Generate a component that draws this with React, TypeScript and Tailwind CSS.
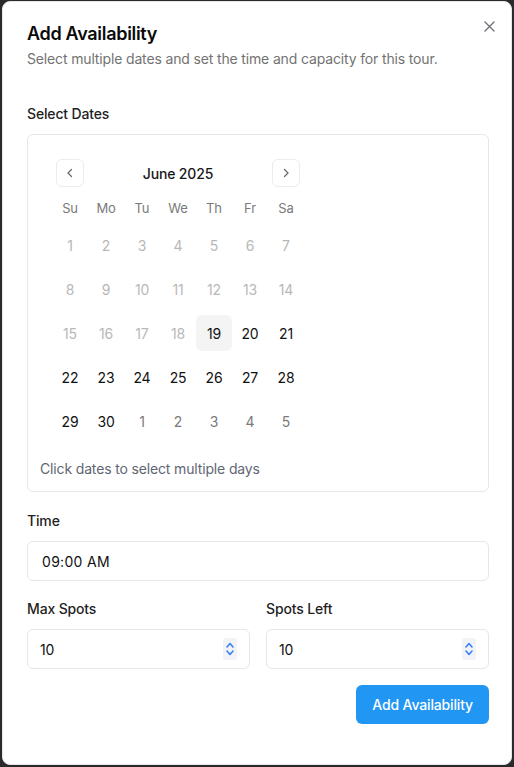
import React from "react";

const weeks: { d: number; t: "dis" | "sel" | "on" | "out" }[][] = [
  [1, 2, 3, 4, 5, 6, 7].map((d) => ({ d, t: "dis" as const })),
  [8, 9, 10, 11, 12, 13, 14].map((d) => ({ d, t: "dis" as const })),
  [
    { d: 15, t: "dis" },
    { d: 16, t: "dis" },
    { d: 17, t: "dis" },
    { d: 18, t: "dis" },
    { d: 19, t: "sel" },
    { d: 20, t: "on" },
    { d: 21, t: "on" },
  ],
  [22, 23, 24, 25, 26, 27, 28].map((d) => ({ d, t: "on" as const })),
  [
    { d: 29, t: "on" },
    { d: 30, t: "on" },
    { d: 1, t: "out" },
    { d: 2, t: "out" },
    { d: 3, t: "out" },
    { d: 4, t: "out" },
    { d: 5, t: "out" },
  ],
];

function Spinner() {
  return (
    <div className="w-[14px] h-[22px] rounded-[3px] bg-[#f1f3f7] flex items-center justify-center">
      <svg width="10" height="18" viewBox="0 0 10 18" fill="none">
        <path d="M2 7 L5 3.5 L8 7" stroke="#3b82f6" strokeWidth="1.6" strokeLinecap="round" strokeLinejoin="round" />
        <path d="M2 11 L5 14.5 L8 11" stroke="#3b82f6" strokeWidth="1.6" strokeLinecap="round" strokeLinejoin="round" />
      </svg>
    </div>
  );
}

export default function App() {
  return (
    <div
      className="w-[514px] h-[767px] bg-[#2a2a2a] pl-[2px] pt-[1px] tracking-[-0.15px]"
      style={{ fontFamily: "Inter, 'Liberation Sans', sans-serif" }}
    >
      <div className="relative w-[510px] h-[764px] bg-white rounded-[8px] border border-[#e5e7eb] pl-6 pr-[22px] pt-[18px]">
        <button className="absolute right-[15px] top-[17px] w-[14px] h-[14px] flex items-center justify-center">
          <svg width="11" height="11" viewBox="0 0 11 11">
            <path d="M1 1 L10 10 M10 1 L1 10" stroke="#71717a" strokeWidth="1.4" strokeLinecap="round" />
          </svg>
        </button>
        <h2 className="text-[18px] leading-[28px] font-semibold text-[#0a0a0a] tracking-[-0.3px]">Add Availability</h2>
        <p className="mt-[1px] text-[14px] leading-[20px] text-[#737373]">
          Select multiple dates and set the time and capacity for this tour.
        </p>

        <div className="mt-[35px] text-[14px] leading-[20px] font-medium text-[#1f1f1f]">Select Dates</div>
        <div className="mt-[10px] border border-[#e5e7eb] rounded-[6px] p-3">
          <div className="p-3 w-[276px]">
            <div className="flex items-center justify-between h-[28px] px-[4px]">
              <button className="w-[28px] h-[28px] rounded-[6px] border border-[#ececec] flex items-center justify-center">
                <svg width="12" height="12" viewBox="0 0 12 12">
                  <path d="M7.5 2.5 L4 6 L7.5 9.5" stroke="#6b6b6b" strokeWidth="1.3" fill="none" strokeLinecap="round" strokeLinejoin="round" />
                </svg>
              </button>
              <div className="text-[14px] font-medium text-[#171717]">June 2025</div>
              <button className="w-[28px] h-[28px] rounded-[6px] border border-[#ececec] flex items-center justify-center">
                <svg width="12" height="12" viewBox="0 0 12 12">
                  <path d="M4.5 2.5 L8 6 L4.5 9.5" stroke="#6b6b6b" strokeWidth="1.3" fill="none" strokeLinecap="round" strokeLinejoin="round" />
                </svg>
              </button>
            </div>
            <div className="mt-3 grid grid-cols-7 w-[252px] h-[20px] items-center">
              {["Su", "Mo", "Tu", "We", "Th", "Fr", "Sa"].map((w) => (
                <div key={w} className="text-center text-[13px] text-[#7a7a7a]">
                  {w}
                </div>
              ))}
            </div>
            {weeks.map((row, i) => (
              <div key={i} className="mt-2 grid grid-cols-7 w-[252px]">
                {row.map((c, j) => (
                  <div
                    key={j}
                    className={
                      "h-[36px] w-[36px] flex items-center justify-center text-[14px] rounded-[6px] " +
                      (c.t === "dis"
                        ? "text-[#b8b8b8]"
                        : c.t === "out"
                        ? "text-[#7a7a7a]"
                        : c.t === "sel"
                        ? "bg-[#f4f4f4] text-[#111111]"
                        : "text-[#111111]")
                    }
                  >
                    {c.d}
                  </div>
                ))}
              </div>
            ))}
          </div>
          <p className="mt-2 text-[14px] leading-[20px] text-[#5f6673]">Click dates to select multiple days</p>
        </div>

        <div className="mt-[19px] text-[14px] leading-[20px] font-medium text-[#1f1f1f]">Time</div>
        <div className="mt-[10px] h-[40px] border border-[#e5e7eb] rounded-[6px] flex items-center pl-[14px] text-[14px] text-[#111111] tracking-[0.3px]">
          09:00 AM
        </div>

        <div className="mt-[18px] grid grid-cols-2 gap-4">
          <div>
            <div className="text-[14px] leading-[20px] font-medium text-[#1f1f1f]">Max Spots</div>
            <div className="mt-[10px] h-[40px] border border-[#e5e7eb] rounded-[6px] flex items-center justify-between pl-3 pr-[12px] text-[14px] text-[#111111]">
              <span>10</span>
              <Spinner />
            </div>
          </div>
          <div>
            <div className="text-[14px] leading-[20px] font-medium text-[#1f1f1f]">Spots Left</div>
            <div className="mt-[10px] h-[40px] border border-[#e5e7eb] rounded-[6px] flex items-center justify-between pl-3 pr-[12px] text-[14px] text-[#111111]">
              <span>10</span>
              <Spinner />
            </div>
          </div>
        </div>

        <div className="mt-[16px] flex justify-end">
          <button className="h-[39px] px-4 rounded-[6px] bg-[#2196f3] text-white text-[14px] font-medium whitespace-nowrap">
            Add Availability
          </button>
        </div>
      </div>
    </div>
  );
}
